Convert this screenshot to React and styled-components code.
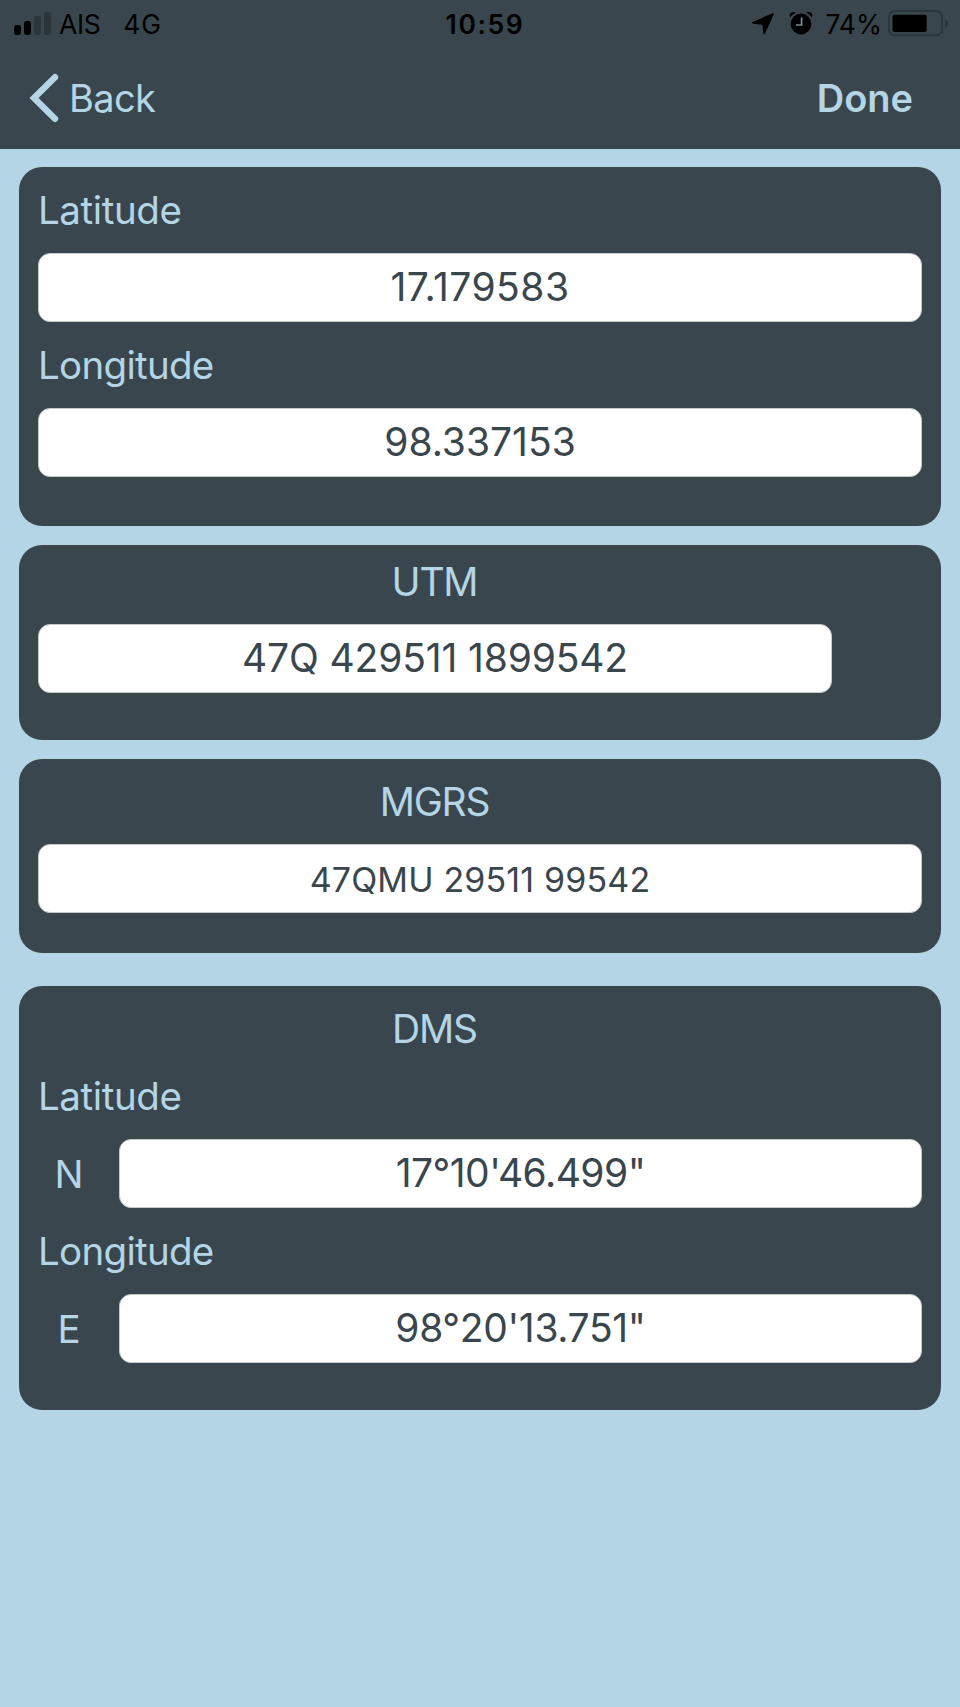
import styled, { createGlobalStyle } from "styled-components";

const colors = {
  dark: "#3a464d",
  light: "#b4d5e5",
  faded: "#2b353a",
  border: "#c3c8cb",
};

const GlobalStyle = createGlobalStyle`
  * {
    box-sizing: border-box;
  }
  body {
    margin: 0;
    background: ${colors.light};
    font-family: Inter, "Liberation Sans", sans-serif;
  }
`;

const Screen = styled.div`
  min-height: 1707px;
  background: ${colors.light};
`;

const Header = styled.header`
  height: 149px;
  background: ${colors.dark};
`;

const StatusBar = styled.div`
  display: grid;
  grid-template-columns: 1fr auto 1fr;
  align-items: center;
  height: 48px;
  color: #000;
  font-size: 26.5px;
  line-height: 48px;
  white-space: nowrap;
`;

const StatusGroup = styled.div`
  display: flex;
  align-items: center;
  justify-content: ${({ $end }) => ($end ? "flex-end" : "flex-start")};
  height: 48px;

  svg {
    display: block;
    flex: none;
  }
`;

const Carrier = styled.span`
  margin-left: 4px;
  letter-spacing: -0.35px;
`;

const Network = styled.span`
  margin-left: 23px;
  letter-spacing: 0.8px;
`;

const Time = styled.span`
  margin-left: 10px;
  font-weight: 600;
  letter-spacing: 1.6px;
`;

const StatusIcons = styled.div`
  display: flex;
  gap: 11px;
`;

const BatteryLevel = styled.span`
  margin: 0 4px 0 11px;
`;

const NavBar = styled.nav`
  display: flex;
  align-items: center;
  justify-content: space-between;
  height: 99px;
  padding: 0 47px 0 28px;
`;

const NavButton = styled.button`
  display: flex;
  align-items: center;
  padding: 0;
  border: 0;
  background: none;
  color: ${colors.light};
  font-family: inherit;
  font-size: 38px;
  font-weight: ${({ $bold }) => ($bold ? 600 : 400)};
  line-height: 48px;
  letter-spacing: ${({ $bold }) => ($bold ? "0" : "-0.6px")};

  svg {
    margin-right: 9px;
  }
`;

const Content = styled.main`
  display: flex;
  flex-direction: column;
  gap: 19px;
  padding: 18px 19px 19px;
`;

const Card = styled.section`
  height: ${({ $height }) => $height}px;
  margin-top: ${({ $offset }) => $offset || 0}px;
  padding: 0 19px;
  border-radius: 23px;
  background: ${colors.dark};
`;

const Label = styled.div`
  height: 86px;
  color: ${colors.light};
  font-size: 38.5px;
  line-height: 87px;
  letter-spacing: ${({ $spacing }) => $spacing || 0}px;
`;

const Title = styled.h2`
  width: 793px;
  height: ${({ $height }) => $height}px;
  margin: 0;
  color: ${colors.light};
  font-size: 39px;
  font-weight: 400;
  line-height: ${({ $line }) => $line || 86}px;
  letter-spacing: -1.2px;
  text-align: center;
`;

const Row = styled.div`
  display: grid;
  grid-template-columns: 62px 1fr;
  column-gap: 19px;
  height: 69px;
`;

const Hemisphere = styled.span`
  color: ${colors.light};
  font-size: 38.5px;
  line-height: 71px;
  text-align: center;
`;

const Value = styled.input`
  display: block;
  width: ${({ $width }) => ($width ? `${$width}px` : "100%")};
  height: 69px;
  padding: ${({ $small }) => ($small ? "2px 0 0" : "0 0 2px")};
  border: 1px solid ${colors.border};
  border-radius: 12px;
  outline: none;
  background: #fff;
  color: ${colors.dark};
  font-family: inherit;
  font-size: ${({ $small }) => ($small ? 34 : 39)}px;
  letter-spacing: ${({ $spacing }) => $spacing || 0}px;
  text-align: center;
`;

const SignalIcon = () => (
  <svg width="55" height="48" viewBox="0 0 55 48">
    <rect x="14" y="25" width="7" height="10" rx="2.4" />
    <rect x="24" y="21" width="7" height="14" rx="2.4" />
    <rect x="34" y="16" width="7" height="19" rx="2.4" fill={colors.faded} />
    <rect x="44" y="12" width="7" height="23" rx="2.4" fill={colors.faded} />
  </svg>
);

const LocationIcon = () => (
  <svg width="26" height="48" viewBox="0 0 26 48">
    <path
      d="M3 22.8 L23 14 L14.2 33.2 L13.2 23.8 Z"
      stroke="#000"
      strokeWidth="1.8"
      strokeLinejoin="round"
    />
  </svg>
);

const AlarmIcon = () => (
  <svg width="27" height="48" viewBox="0 0 27 48">
    <circle cx="14" cy="24" r="10.4" />
    <path d="M3.2 17.2 Q1.6 13.6 4.6 12.4 Q7.4 11.6 9 12.8 Q5.4 14.2 3.2 17.2 Z" />
    <path d="M24.8 17.2 Q26.4 13.6 23.4 12.4 Q20.6 11.6 19 12.8 Q22.6 14.2 24.8 17.2 Z" />
    <path
      d="M14.6 17.5 V25 H9"
      fill="none"
      stroke="#7e8c94"
      strokeWidth="1.7"
    />
  </svg>
);

const BatteryIcon = () => (
  <svg width="74" height="48" viewBox="0 0 74 48">
    <rect
      x="3"
      y="11"
      width="53"
      height="24.5"
      rx="6"
      fill="none"
      stroke={colors.faded}
      strokeWidth="2"
    />
    <rect x="6.5" y="14.7" width="34.2" height="17.3" rx="2" />
    <path
      d="M59 19 Q62.4 20.6 62.4 23.5 Q62.4 26.4 59 28 Z"
      fill={colors.faded}
    />
  </svg>
);

const ChevronIcon = () => (
  <svg width="32" height="50" viewBox="0 0 32 50">
    <path
      d="M27 4.2 L6 25 L27 45.8"
      fill="none"
      stroke={colors.light}
      strokeWidth="6.4"
      strokeLinecap="round"
      strokeLinejoin="miter"
    />
  </svg>
);

const App = () => {
  return (
    <>
      <GlobalStyle />
      <Screen>
        <Header>
          <StatusBar>
            <StatusGroup>
              <SignalIcon />
              <Carrier>AIS</Carrier>
              <Network>4G</Network>
            </StatusGroup>
            <Time>10:59</Time>
            <StatusGroup $end>
              <StatusIcons>
                <LocationIcon />
                <AlarmIcon />
              </StatusIcons>
              <BatteryLevel>74%</BatteryLevel>
              <BatteryIcon />
            </StatusGroup>
          </StatusBar>
          <NavBar>
            <NavButton>
              <ChevronIcon />
              Back
            </NavButton>
            <NavButton $bold>Done</NavButton>
          </NavBar>
        </Header>

        <Content>
          <Card $height={359}>
            <Label $spacing={-0.4}>Latitude</Label>
            <Value defaultValue="17.179583" $spacing={0.5} />
            <Label $spacing={-0.7}>Longitude</Label>
            <Value defaultValue="98.337153" />
          </Card>

          <Card $height={195}>
            <Title $height={79} $line={74}>
              UTM
            </Title>
            <Value
              defaultValue="47Q 429511 1899542"
              $width={794}
              $spacing={-0.15}
            />
          </Card>

          <Card $height={194}>
            <Title $height={85}>MGRS</Title>
            <Value defaultValue="47QMU 29511 99542" $small $spacing={0.15} />
          </Card>

          <Card $height={424} $offset={14}>
            <Title $height={67}>DMS</Title>
            <Label $spacing={-0.4}>Latitude</Label>
            <Row>
              <Hemisphere>N</Hemisphere>
              <Value defaultValue={"17°10'46.499\""} $spacing={-0.52} />
            </Row>
            <Label $spacing={-0.7}>Longitude</Label>
            <Row>
              <Hemisphere>E</Hemisphere>
              <Value defaultValue={"98°20'13.751\""} $spacing={-0.34} />
            </Row>
          </Card>
        </Content>
      </Screen>
    </>
  );
};

export default App;
